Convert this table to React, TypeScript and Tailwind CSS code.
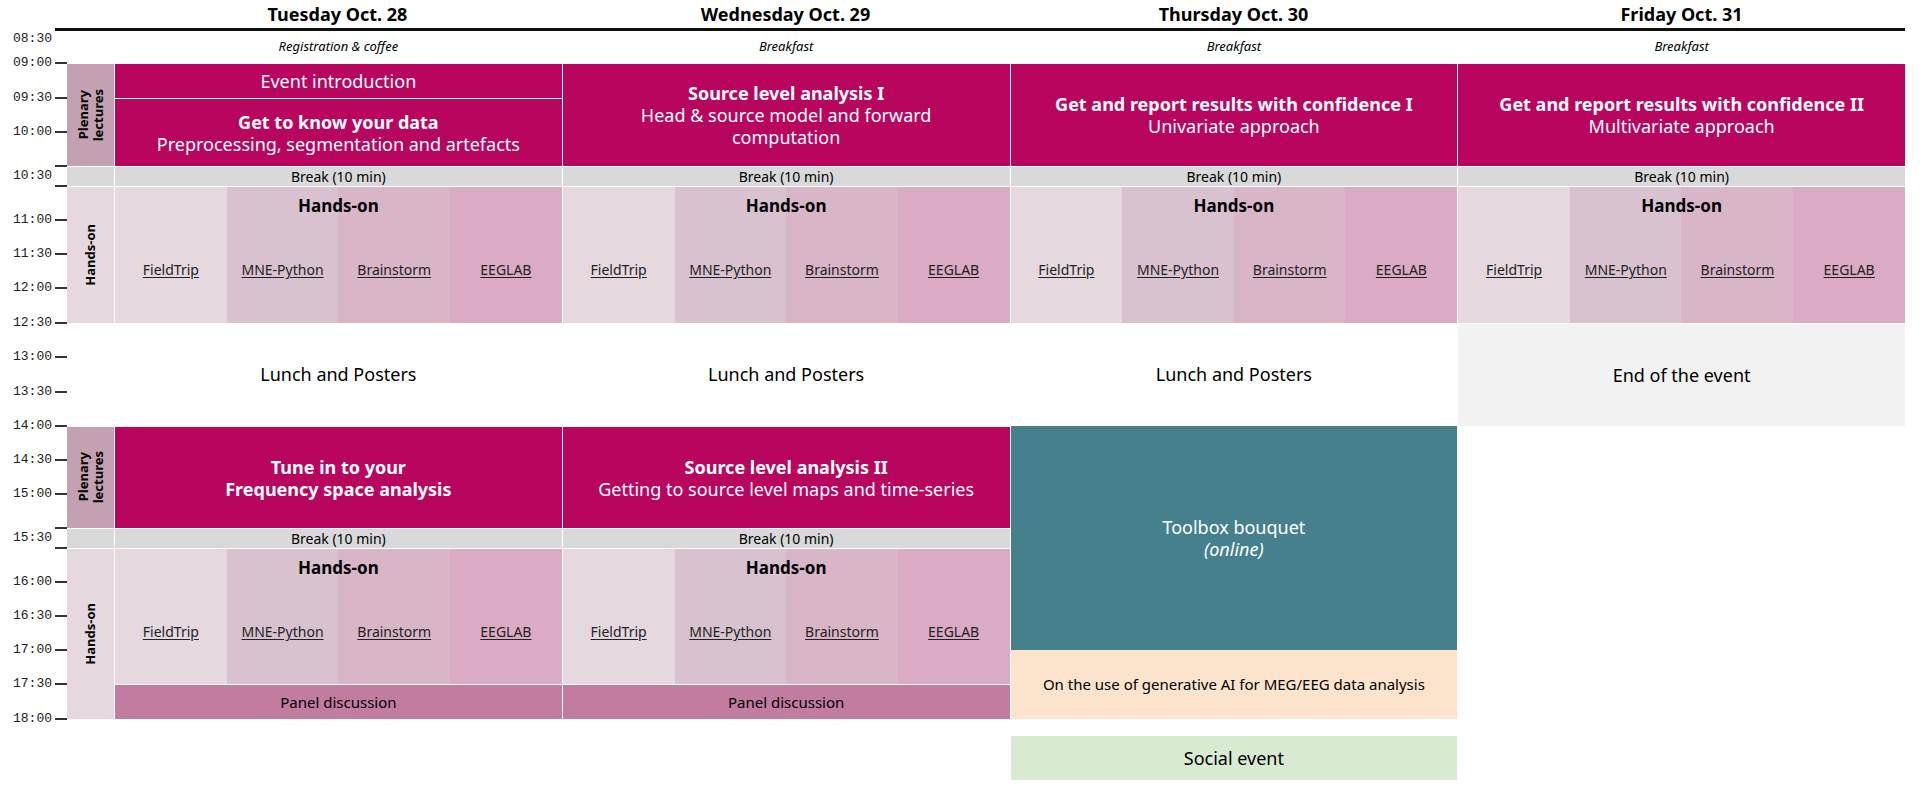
import type { ReactNode } from 'react';

const SANS = "font-['Noto_Sans',_'Open_Sans',_sans-serif]";

const days = ['Tuesday Oct. 28', 'Wednesday Oct. 29', 'Thursday Oct. 30', 'Friday Oct. 31'];
const toolboxes = ['FieldTrip', 'MNE-Python', 'Brainstorm', 'EEGLAB'];

function Tick({ label }: { label?: string }) {
  return (
    <div className="h-0 flex items-center">
      <span className="w-[52px] text-right">{label}</span>
      <div className="w-[12px] h-[2px] ml-[3px] bg-[#333]" />
    </div>
  );
}

function Gap({ h }: { h: number }) {
  return <div style={{ height: h }} />;
}

function BreakLabel({ label }: { label: string }) {
  return (
    <div className="h-[20px] flex items-center">
      <span className="w-[52px] text-right">{label}</span>
    </div>
  );
}

function TimeAxis() {
  const afterBreak1: [number, string][] = [
    [34, '11:00'], [34, '11:30'], [34, '12:00'], [35, '12:30'], [34, '13:00'],
    [35, '13:30'], [34, '14:00'], [34, '14:30'], [34, '15:00'], [34, ''],
  ];
  const afterBreak2: [number, string][] = [
    [34, '16:00'], [34, '16:30'], [34, '17:00'], [34, '17:30'], [35, '18:00'],
  ];
  return (
    <div className="w-[67px] flex flex-col font-['Liberation_Mono',_monospace] text-[13px] text-[#222]">
      <div className="h-[32px] flex items-start">
        <span className="w-[52px] text-right leading-[16px]">08:30</span>
      </div>
      <Tick label="09:00" />
      <Gap h={35} />
      <Tick label="09:30" />
      <Gap h={34} />
      <Tick label="10:00" />
      <Gap h={34} />
      <Tick />
      <BreakLabel label="10:30" />
      <Tick />
      {afterBreak1.map(([h, t], i) => (
        <div key={i}>
          <Gap h={h} />
          <Tick label={t} />
        </div>
      ))}
      <BreakLabel label="15:30" />
      <Tick />
      {afterBreak2.map(([h, t]) => (
        <div key={t}>
          <Gap h={h} />
          <Tick label={t} />
        </div>
      ))}
    </div>
  );
}

function SideLabel({ h, bg, children }: { h: string; bg: string; children: ReactNode }) {
  return (
    <div className={`${h} ${bg} border-t border-white flex items-center justify-center`}>
      <div className="[writing-mode:vertical-rl] rotate-180 text-[13px] font-bold leading-[15px] text-black text-center">
        {children}
      </div>
    </div>
  );
}

function LabelColumn() {
  return (
    <div className={`w-[47px] flex flex-col ${SANS}`}>
      <div className="h-[32px]" />
      <SideLabel h="h-[103px]" bg="bg-[#c3a0b2]">Plenary<br />lectures</SideLabel>
      <div className="h-[20px] bg-[#d9d9d9] border-t border-white" />
      <SideLabel h="h-[137px]" bg="bg-[#e6d8df]">Hands-on</SideLabel>
      <div className="h-[103px]" />
      <SideLabel h="h-[102px]" bg="bg-[#c3a0b2]">Plenary<br />lectures</SideLabel>
      <div className="h-[20px] bg-[#d9d9d9] border-t border-white" />
      <SideLabel h="h-[171px]" bg="bg-[#e6d8df]">Hands-on</SideLabel>
    </div>
  );
}

function Morning({ label }: { label: string }) {
  return (
    <div className="h-[32px] flex items-center justify-center italic text-[13px] text-black">{label}</div>
  );
}

function Plenary({ h, children }: { h: string; children: ReactNode }) {
  return (
    <div className={`${h} bg-[#b8065f] border-t border-white flex flex-col items-center justify-center text-center text-white text-[18px] leading-[22px] px-3`}>
      {children}
    </div>
  );
}

function Break() {
  return (
    <div className="h-[20px] bg-[#d9d9d9] border-t border-white flex items-center justify-center text-[14px] text-black">
      Break (10 min)
    </div>
  );
}

function HandsOn({ h }: { h: string }) {
  return (
    <div
      className={`${h} border-t border-white flex flex-col bg-[linear-gradient(to_right,#e6d8df_25%,#d9c2cf_25%,#d9c2cf_50%,#d9b5c8_50%,#d9b5c8_75%,#dbabc5_75%)]`}
    >
      <div className="pt-[7px] text-center text-[17px] font-bold leading-[24px] text-black">Hands-on</div>
      <div className="flex-1 grid grid-cols-4 items-center pb-[2px]">
        {toolboxes.map((t) => (
          <a key={t} href="#" className="text-center text-[14px] text-[#222] underline underline-offset-2">
            {t}
          </a>
        ))}
      </div>
    </div>
  );
}

function Lunch() {
  return <div className="h-[103px] flex items-center justify-center text-[18px] text-black">Lunch and Posters</div>;
}

function Panel() {
  return (
    <div className="h-[35px] bg-[#c27c9f] border-t border-white flex items-center justify-center text-[15px] text-black">
      Panel discussion
    </div>
  );
}

function Tuesday() {
  return (
    <div className="flex-1 flex flex-col">
      <Morning label="Registration & coffee" />
      <Plenary h="h-[35px]">Event introduction</Plenary>
      <Plenary h="h-[68px]">
        <span className="font-bold">Get to know your data</span>
        <span>Preprocessing, segmentation and artefacts</span>
      </Plenary>
      <Break />
      <HandsOn h="h-[137px]" />
      <Lunch />
      <Plenary h="h-[102px]">
        <span className="font-bold">Tune in to your</span>
        <span className="font-bold">Frequency space analysis</span>
      </Plenary>
      <Break />
      <HandsOn h="h-[136px]" />
      <Panel />
    </div>
  );
}

function Wednesday() {
  return (
    <div className="flex-1 flex flex-col">
      <Morning label="Breakfast" />
      <Plenary h="h-[103px]">
        <span className="font-bold">Source level analysis I</span>
        <span>Head &amp; source model and forward</span>
        <span>computation</span>
      </Plenary>
      <Break />
      <HandsOn h="h-[137px]" />
      <Lunch />
      <Plenary h="h-[102px]">
        <span className="font-bold">Source level analysis II</span>
        <span>Getting to source level maps and time-series</span>
      </Plenary>
      <Break />
      <HandsOn h="h-[136px]" />
      <Panel />
    </div>
  );
}

function Thursday() {
  return (
    <div className="flex-1 flex flex-col">
      <Morning label="Breakfast" />
      <Plenary h="h-[103px]">
        <span className="font-bold">Get and report results with confidence I</span>
        <span>Univariate approach</span>
      </Plenary>
      <Break />
      <HandsOn h="h-[137px]" />
      <Lunch />
      <div className="h-[224px] bg-[#47808d] flex flex-col items-center justify-center text-white text-[18px] leading-[22px]">
        <span>Toolbox bouquet</span>
        <span className="italic">(online)</span>
      </div>
      <div className="h-[69px] bg-[#fce4cc] flex items-center justify-center text-[15px] text-black">
        On the use of generative AI for MEG/EEG data analysis
      </div>
      <div className="h-[17px]" />
      <div className="h-[44px] bg-[#d9ead3] flex items-center justify-center text-[18px] text-black">
        Social event
      </div>
    </div>
  );
}

function Friday() {
  return (
    <div className="flex-1 flex flex-col">
      <Morning label="Breakfast" />
      <Plenary h="h-[103px]">
        <span className="font-bold">Get and report results with confidence II</span>
        <span>Multivariate approach</span>
      </Plenary>
      <Break />
      <HandsOn h="h-[137px]" />
      <div className="h-[103px] bg-[#f2f2f2] border-t border-white flex items-center justify-center text-[18px] text-black">
        End of the event
      </div>
    </div>
  );
}

export default function App() {
  return (
    <div className={`w-[1923px] h-[794px] bg-white ${SANS} text-black`}>
      <div className="flex h-[28px] ml-[114px] mr-[18px] gap-px">
        {days.map((d) => (
          <div key={d} className="flex-1 flex items-center justify-center text-[18px] font-bold">
            {d}
          </div>
        ))}
      </div>
      <div className="h-[3px] ml-[55px] mr-[18px] bg-[#111]" />
      <div className="flex mr-[18px]">
        <TimeAxis />
        <LabelColumn />
        <div className="flex-1 flex gap-px pl-px">
          <Tuesday />
          <Wednesday />
          <Thursday />
          <Friday />
        </div>
      </div>
    </div>
  );
}
